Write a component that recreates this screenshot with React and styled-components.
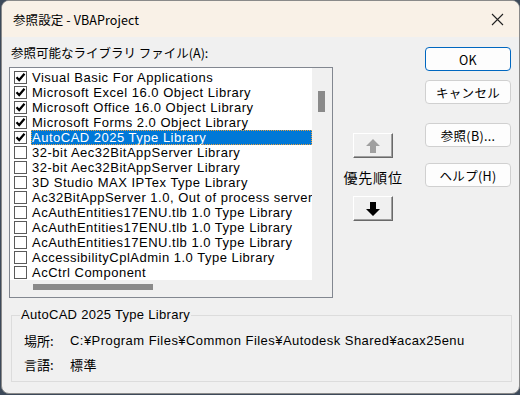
import React from "react";
import styled, { createGlobalStyle } from "styled-components";

const Global = createGlobalStyle`
  html, body { margin: 0; padding: 0; background: #3d4a5a; }
  body { width: 520px; height: 395px; overflow: hidden; }
  * { box-sizing: border-box; }
`;

const Window = styled.div`
  width: 519px;
  height: 394px;
  margin-left: 1px;
  background: #f0f0f0;
  border: 1px solid #8a8a8a;
  border-radius: 8px;
  overflow: hidden;
  display: flex;
  flex-direction: column;
  font-family: "Noto Sans CJK JP", "Liberation Sans", sans-serif;
  color: #000;
`;

const TitleBar = styled.div`
  height: 36px;
  flex: none;
  background: #f9f1e7;
  display: flex;
  align-items: center;
  justify-content: space-between;
  padding: 0 12px 0 11px;
  font-size: 12.5px;
`;

const Title = styled.span`
  letter-spacing: 0.1px;
`;

const CloseBtn = styled.div`
  width: 16px;
  height: 16px;
  display: flex;
  align-items: center;
  justify-content: center;
  margin-right: 2px;
`;

const Body = styled.div`
  flex: 1;
  display: flex;
  flex-direction: column;
  padding: 8px 8px 8px 7px;
`;

const TopRow = styled.div`
  display: flex;
`;

const LeftCol = styled.div`
  width: 325px;
  display: flex;
  flex-direction: column;
`;

const Label = styled.div`
  font-size: 12.5px;
  height: 15px;
  line-height: 15px;
  margin: 0 0 7px 2px;
  white-space: nowrap;
`;

const ListBox = styled.div`
  height: 231px;
  border: 1px solid #828790;
  background: #f0f0f0;
  display: grid;
  grid-template-columns: 1fr 20px;
  grid-template-rows: 1fr 17px;
`;

const Items = styled.div`
  background: #fff;
  overflow: hidden;
  padding: 2px 0 0 4px;
`;

const Row = styled.div`
  height: 15px;
  display: flex;
  align-items: center;
  flex: none;
`;

const Check = styled.div`
  width: 13px;
  height: 13px;
  border: 1px solid #5a5a5a;
  background: #fff;
  flex: none;
  display: flex;
  align-items: center;
  justify-content: center;
`;

const ItemText = styled.span`
  margin-left: 4px;
  padding: 0 1px 0 1px;
  height: 15px;
  line-height: 15px;
  font-family: "Liberation Sans", "Noto Sans CJK JP", sans-serif;
  font-size: 13px;
  letter-spacing: 0.5px;
  white-space: nowrap;
  flex: 1;
  ${(p) =>
    p.$selected
      ? `background: #0078d7; color: #fff; outline: 1px dotted #e8a040; outline-offset: -1px;`
      : ``}
`;

const VScroll = styled.div`
  background: #f0f0f0;
  position: relative;
`;

const VThumb = styled.div`
  position: absolute;
  left: 6px;
  top: 23px;
  width: 7px;
  height: 21px;
  background: #8a8a8a;
`;

const HScroll = styled.div`
  background: #f0f0f0;
  position: relative;
`;

const HThumb = styled.div`
  position: absolute;
  left: 23px;
  top: 4px;
  width: 120px;
  height: 6px;
  background: #8a8a8a;
`;

const Corner = styled.div`
  background: #f0f0f0;
`;

const MidCol = styled.div`
  width: 70px;
  margin-left: 5px;
  display: flex;
  flex-direction: column;
  align-items: center;
  padding-top: 88px;
`;

const ArrowBtn = styled.div`
  width: 40px;
  height: 25px;
  background: #f0f0f0;
  border-top: 1px solid #fff;
  border-left: 1px solid #fff;
  border-right: 1px solid #696969;
  border-bottom: 1px solid #696969;
  box-shadow: inset -1px -1px 0 #a0a0a0;
  display: flex;
  align-items: center;
  justify-content: center;
`;

const Priority = styled.div`
  font-size: 14px;
  letter-spacing: 0.8px;
  margin: 10px 0 10px 0;
  line-height: 18px;
`;

const RightCol = styled.div`
  margin-left: 17px;
  display: flex;
  flex-direction: column;
  padding-top: 2px;
`;

const Button = styled.div`
  width: 86px;
  height: 24px;
  margin-top: ${(p) => p.$gap || 0}px;
  background: #fdfdfd;
  border: 1px solid ${(p) => (p.$primary ? "#0067c0" : "#d0d0d0")};
  border-radius: 4px;
  display: flex;
  align-items: center;
  justify-content: center;
  font-size: 12.5px;
  letter-spacing: 0.3px;
`;

const Group = styled.fieldset`
  margin: 10px 0 0 2px;
  width: 501px;
  height: 74px;
  border: 1px solid #dcdcdc;
  padding: 6px 0 0 8px;
  min-width: 0;
`;

const Legend = styled.legend`
  font-family: "Liberation Sans", "Noto Sans CJK JP", sans-serif;
  font-size: 13px;
  letter-spacing: 0.3px;
  padding: 0 1px;
  line-height: 14px;
`;

const InfoRow = styled.div`
  display: flex;
  height: 24px;
  align-items: center;
  font-size: 13px;
  padding-left: 4px;
`;

const InfoKey = styled.span`
  width: 46px;
  flex: none;
  font-family: "Noto Sans CJK JP", sans-serif;
`;

const InfoVal = styled.span`
  width: 394px;
  overflow: hidden;
  white-space: nowrap;
  font-family: "Liberation Sans", "Noto Sans CJK JP", sans-serif;
  letter-spacing: 0.45px;
`;

const CheckMark = () => (
  <svg width="11" height="11" viewBox="0 0 11 11">
    <path d="M1.5 5.2 L4.2 8 L9.5 1.8" fill="none" stroke="#000" strokeWidth="2.2" />
  </svg>
);

const items = [
  ["Visual Basic For Applications", true],
  ["Microsoft Excel 16.0 Object Library", true],
  ["Microsoft Office 16.0 Object Library", true],
  ["Microsoft Forms 2.0 Object Library", true],
  ["AutoCAD 2025 Type Library", true, true],
  ["32-bit Aec32BitAppServer Library", false],
  ["32-bit Aec32BitAppServer Library", false],
  ["3D Studio MAX IPTex Type Library", false],
  ["Ac32BitAppServer 1.0, Out of process server", false],
  ["AcAuthEntities17ENU.tlb 1.0 Type Library", false],
  ["AcAuthEntities17ENU.tlb 1.0 Type Library", false],
  ["AcAuthEntities17ENU.tlb 1.0 Type Library", false],
  ["AccessibilityCplAdmin 1.0 Type Library", false],
  ["AcCtrl Component", false],
];

export default function App() {
  return (
    <>
      <Global />
      <Window>
        <TitleBar>
          <Title>参照設定 - VBAProject</Title>
          <CloseBtn>
            <svg width="13" height="13" viewBox="0 0 13 13">
              <path d="M1 1 L12 12 M12 1 L1 12" stroke="#222" strokeWidth="1.1" />
            </svg>
          </CloseBtn>
        </TitleBar>
        <Body>
          <TopRow>
            <LeftCol>
              <Label>参照可能なライブラリ ファイル(A):</Label>
              <ListBox>
                <Items>
                  {items.map(([name, checked, sel], i) => (
                    <Row key={i}>
                      <Check>{checked && <CheckMark />}</Check>
                      <ItemText $selected={sel}>{name}</ItemText>
                    </Row>
                  ))}
                </Items>
                <VScroll>
                  <VThumb />
                </VScroll>
                <HScroll>
                  <HThumb />
                </HScroll>
                <Corner />
              </ListBox>
            </LeftCol>
            <MidCol>
              <ArrowBtn>
                <svg width="16" height="16" viewBox="0 0 16 16">
                  <path d="M8 1 L15 8 L11 8 L11 15 L5 15 L5 8 L1 8 Z" fill="#a0a0a0" />
                </svg>
              </ArrowBtn>
              <Priority>優先順位</Priority>
              <ArrowBtn>
                <svg width="16" height="16" viewBox="0 0 16 16">
                  <path d="M8 15 L15 8 L11 8 L11 1 L5 1 L5 8 L1 8 Z" fill="#000" />
                </svg>
              </ArrowBtn>
            </MidCol>
            <RightCol>
              <Button $primary>OK</Button>
              <Button $gap={9}>キャンセル</Button>
              <Button $gap={19}>参照(B)...</Button>
              <Button $gap={16}>ヘルプ(H)</Button>
            </RightCol>
          </TopRow>
          <Group>
            <Legend>AutoCAD 2025 Type Library</Legend>
            <InfoRow>
              <InfoKey>場所:</InfoKey>
              <InfoVal>C:¥Program Files¥Common Files¥Autodesk Shared¥acax25enu.tlb</InfoVal>
            </InfoRow>
            <InfoRow>
              <InfoKey>言語:</InfoKey>
              <InfoVal>標準</InfoVal>
            </InfoRow>
          </Group>
        </Body>
      </Window>
    </>
  );
}
